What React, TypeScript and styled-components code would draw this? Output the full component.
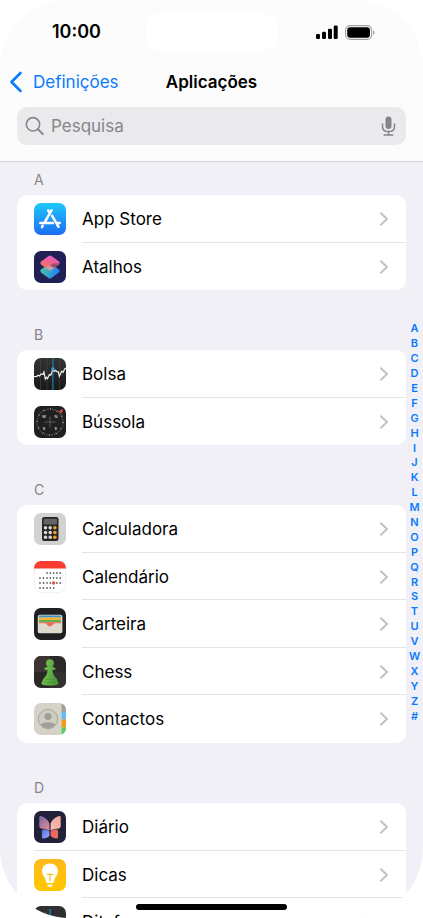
import React from "react";
import styled, { createGlobalStyle } from "styled-components";

const GlobalStyle = createGlobalStyle`
  *, *::before, *::after { box-sizing: border-box; }
  body {
    margin: 0;
    background: #ffffff;
    color: #000000;
    font-family: Inter, "Liberation Sans", sans-serif;
  }
`;

const Screen = styled.div`
  position: relative;
  display: flex;
  flex-direction: column;
  height: 100vh;
  overflow: hidden;
  border-radius: 70px;
  background: #f1f0f6;
`;

const Header = styled.header`
  flex: none;
  background: #fcfcfc;
  border-bottom: 1px solid #d5d5da;
`;

const StatusBar = styled.div`
  display: grid;
  grid-template-columns: 1fr 133px 1fr;
  align-items: center;
  height: 64px;
`;

const Clock = styled.time`
  padding-left: 8px;
  text-align: center;
  font-size: 18px;
  font-weight: 600;
  line-height: 24px;
`;

const Island = styled.div`
  height: 40px;
  border-radius: 20px;
  background: #ffffff;
`;

const StatusIcons = styled.div`
  display: flex;
  justify-content: center;
  align-items: center;
  gap: 7px;
  padding-right: 10px;
`;

const NavBar = styled.nav`
  display: grid;
  grid-template-columns: 1fr auto 1fr;
  align-items: center;
  height: 36px;
  padding: 0 9px;
`;

const BackLink = styled.a`
  display: flex;
  align-items: center;
  gap: 10px;
  color: #0a7aff;
  font-size: 17px;
  line-height: 24px;
  text-decoration: none;
`;

const Title = styled.h1`
  margin: 0;
  font-size: 17px;
  font-weight: 600;
  line-height: 24px;
`;

const SearchBar = styled.div`
  display: flex;
  align-items: center;
  gap: 7px;
  height: 38px;
  margin: 7px 17px 16px;
  padding: 0 10px 0 8px;
  border-radius: 10px;
  background: #eaeaec;
  color: #85858a;
`;

const SearchInput = styled.input`
  flex: 1;
  min-width: 0;
  padding: 0;
  border: 0;
  outline: 0;
  background: transparent;
  color: #000000;
  font: inherit;
  font-size: 17px;
  line-height: 24px;
  &::placeholder { color: #85858a; opacity: 1; }
`;

const IconButton = styled.button`
  display: flex;
  padding: 0;
  border: 0;
  background: none;
  color: inherit;
`;

const Content = styled.main`
  flex: 1;
  min-height: 0;
  overflow: hidden;
  padding: 1px 17px 0;
`;

const Section = styled.section`
  margin-bottom: 28px;
`;

const SectionTitle = styled.h2`
  height: 32px;
  margin: 0;
  padding: 7px 17px 0;
  color: #85858a;
  font-size: 14px;
  font-weight: 400;
  line-height: 20px;
`;

const Card = styled.ul`
  margin: 0;
  padding: 0;
  overflow: hidden;
  list-style: none;
  border-radius: 10px;
  background: #ffffff;
`;

const Row = styled.li`
  height: 48px;
  &:nth-child(even) { height: 47px; }
`;

const RowLink = styled.a`
  display: flex;
  align-items: center;
  gap: 16px;
  height: 100%;
  padding: 0 17px;
  color: inherit;
  font-size: 17px;
  line-height: 24px;
  text-decoration: none;
`;

const AppIcon = styled.svg`
  flex: none;
  width: 32px;
  height: 32px;
  border-radius: 7px;
`;

const AppName = styled.span`
  flex: 1;
`;

const Divider = styled.hr<{ $full?: boolean }>`
  height: 1px;
  margin: -1px 0 0 ${({ $full }) => ($full ? 17 : 65)}px;
  border: 0;
  background: #e4e4e6;
`;

const IndexList = styled.nav`
  position: absolute;
  top: 321px;
  right: 0;
  display: grid;
  grid-auto-rows: 1fr;
  align-items: center;
  width: 17px;
  height: 402px;
  text-align: center;
`;

const IndexLink = styled.a`
  color: #0a7aff;
  font-size: 11px;
  font-weight: 600;
  line-height: 14px;
  text-decoration: none;
`;

const HomeIndicator = styled.div`
  position: absolute;
  bottom: 8px;
  left: 50%;
  width: 151px;
  height: 6px;
  margin-left: -76px;
  border-radius: 3px;
  background: #000000;
`;

const Signal = () => (
  <svg width="22" height="14" viewBox="0 0 22 14" aria-label="Rede">
    <rect x="0" y="9" width="4" height="5" rx="1.2" />
    <rect x="6" y="6.7" width="4" height="7.3" rx="1.2" />
    <rect x="12" y="3.7" width="4" height="10.3" rx="1.2" />
    <rect x="17.7" y="0.5" width="4" height="13.5" rx="1.2" />
  </svg>
);

const Battery = () => (
  <svg width="30" height="15" viewBox="0 0 30 15" aria-label="Bateria">
    <rect x="0.6" y="0.6" width="26" height="13.8" rx="4.4" fill="none" stroke="#a2a2a2" strokeWidth="1.1" />
    <rect x="2.2" y="2.2" width="22.8" height="10.6" rx="3" />
    <path d="M28 5.2c2 .8 2 3.8 0 4.6z" fill="#a2a2a2" />
  </svg>
);

const BackChevron = () => (
  <svg width="14" height="22" viewBox="0 0 14 22" fill="none" stroke="currentColor" strokeWidth="2.6" strokeLinecap="round" strokeLinejoin="round">
    <path d="M11.5 2 2.5 11l9 9" />
  </svg>
);

const Chevron = () => (
  <svg width="10" height="14" viewBox="0 0 10 14" fill="none" stroke="#c2c2c4" strokeWidth="2" strokeLinecap="round" strokeLinejoin="round">
    <path d="m2 1.2 6 5.8-6 5.8" />
  </svg>
);

const Magnifier = () => (
  <svg width="19" height="20" viewBox="0 0 19 20" fill="none" stroke="currentColor" strokeWidth="1.6" strokeLinecap="round">
    <circle cx="8" cy="8.3" r="6.7" />
    <path d="m13 13.3 4.8 4.8" strokeWidth="2" />
  </svg>
);

const Microphone = () => (
  <svg width="15" height="20" viewBox="0 0 15 20" fill="none" stroke="currentColor" strokeWidth="1.5" strokeLinecap="round">
    <rect x="4.5" y="0.5" width="6" height="12.5" rx="3" fill="currentColor" stroke="none" />
    <path d="M1.500 8v2.400c0 3.400 2.500 5.200 6 5.200s6-1.800 6-5.200V8M7.500 15.600v3.400M3.200 19h8.600" />
  </svg>
);

const AppStoreArt = () => (
  <>
    <defs>
      <linearGradient id="store" x2="0" y2="1">
        <stop stopColor="#1ec8fb" />
        <stop offset="1" stopColor="#1d6cf1" />
      </linearGradient>
    </defs>
    <rect width="32" height="32" fill="url(#store)" />
    <g stroke="#fff" strokeWidth="2.5" strokeLinecap="round" fill="none">
      <path d="M17.600 7.300 10.300 19.800M14.200 7.300l1.700 2.900M18.200 12.800l6.300 11M6.300 19.900h12.500M22.300 19.900h3.400M8.700 22.800 8 24.100" />
    </g>
  </>
);

const ShortcutsArt = () => (
  <>
    <defs>
      <linearGradient id="scTop" x1="0.8" y1="0" x2="0.3" y2="1">
        <stop stopColor="#e45bd8" />
        <stop offset="0.55" stopColor="#ef6680" />
        <stop offset="1" stopColor="#fa765f" />
      </linearGradient>
      <linearGradient id="scBottom" x2="1" y2="0.2">
        <stop stopColor="#4ccc94" />
        <stop offset="0.5" stopColor="#39a9c7" />
        <stop offset="1" stopColor="#237cf4" />
      </linearGradient>
    </defs>
    <rect width="32" height="32" fill="#202057" />
    <path d="M7 18.500 14.300 13.200q1.700-1 3.400 0L25 18.500q1.400 1.500 0 3L17.500 27q-1.500 1-3 0L7 21.500q-1.400-1.500 0-3z" fill="url(#scBottom)" />
    <path d="M7 10.500 14.500 5q1.500-1 3 0L25 10.500q1.400 1.500 0 3l-7.300 5.300q-1.700 1-3.400 0L7 13.500q-1.400-1.500 0-3z" fill="url(#scTop)" />
    <path d="M16 14.500 21 17l-4 2.200q-1.200.5-2.700-.4L11.500 17z" fill="#b3b4c9" opacity="0.7" />
    <path d="m19 12.500 6.500-.5q.3 1-.5 1.800L20 17l-4-2.500z" fill="#75415f" opacity="0.65" />
  </>
);

const StocksArt = () => (
  <>
    <defs>
      <linearGradient id="stocks" x2="0" y2="1">
        <stop stopColor="#343434" />
        <stop offset="1" stopColor="#171717" />
      </linearGradient>
    </defs>
    <rect width="32" height="32" fill="url(#stocks)" />
    <path d="M6.500 0v32M13 0v32M25.500 0v32" stroke="#484848" strokeWidth="0.6" />
    <path d="M18.900 0v32" stroke="#167aa8" strokeWidth="1.3" />
    <path d="m0 18.500 2.400.2L4 17.200l1.500.8 1.600-2 1.800.6L10 14l1.300 7 1-1.800 1.200 1.500 1.800-4.200 1.500.6 2-5.700 1.500 2 1.300-1.100 1.600 1.600 1.200 0 .9 4.500 2.400-5.100 1.400 1.100 1.400-3.200L32 10" fill="none" stroke="#f4f4f4" strokeWidth="1.2" />
    <circle cx="18.9" cy="11" r="1.7" fill="#26a9e1" />
  </>
);

const CompassArt = () => (
  <>
    <rect width="32" height="32" fill="#202020" />
    <circle cx="16" cy="16" r="13" fill="none" stroke="#7c7c7c" strokeWidth="1.5" strokeDasharray="0.5 1.2" />
    <circle cx="16" cy="16" r="13" fill="none" stroke="#b5b5b5" strokeWidth="1.6" strokeDasharray="0.7 6.1" />
    <path d="M16 10.500v11M10.500 16h11" stroke="#777" strokeWidth="0.7" />
    <path d="m24.500 5 4.500-2-1.200 4.800z" fill="#ef4444" />
    <g fill="#cccccc" fontSize="4" fontWeight="600" textAnchor="middle">
      <text x="10" y="12">W</text>
      <text x="22" y="12">N</text>
      <text x="10" y="24">S</text>
      <text x="22" y="24">E</text>
    </g>
  </>
);

const CalculatorArt = () => (
  <>
    <rect width="32" height="32" fill="#d2d2d1" />
    <rect x="8" y="4" width="16.5" height="24" rx="2.3" fill="#262626" />
    <rect x="9.5" y="5.7" width="13.5" height="5.8" rx="1.3" fill="#636463" />
    {[14.7, 19.5, 24.2].map((y) => (
      <g key={y}>
        <circle cx="11.5" cy={y} r="1.75" fill="#d8d8d8" />
        <circle cx="16.2" cy={y} r="1.75" fill="#d8d8d8" />
        <circle cx="20.9" cy={y} r="1.75" fill="#f79f20" />
      </g>
    ))}
  </>
);

const calendarWeeks: [number, number[]][] = [
  [12, [13, 16.3, 19.6, 22.9, 26.2]],
  [17, [6, 9.5, 13, 16.3, 19.6, 22.9, 26.2]],
  [22, [6, 9.5, 13, 16.3, 22.9, 26.2]],
  [27, [6, 9.5, 13, 16.3, 19.6]],
];

const CalendarArt = () => (
  <>
    <rect x="0.3" y="0.3" width="31.4" height="31.4" rx="7" fill="#fff" stroke="#e4e4e4" strokeWidth="0.6" />
    <path d="M0 0h32v7.500H0z" fill="#fb3c31" />
    {calendarWeeks.map(([y, days]) =>
      days.map((x) => <circle key={`${x}-${y}`} cx={x} cy={y} r="0.8" fill="#161616" />),
    )}
    <circle cx="19.6" cy="22" r="1.7" fill="#ee4a43" />
  </>
);

const WalletArt = () => (
  <>
    <rect width="32" height="32" fill="#1f2021" />
    <rect x="3.8" y="6.7" width="24.6" height="18.6" rx="2" fill="#d9d7c9" />
    <path d="M5 9.500V8.600q0-1.200 1.200-1.200h19.600q1.200 0 1.200 1.200v.9z" fill="#3e93c9" />
    <path d="M5 9.500h22v2.400H5z" fill="#efb23c" />
    <path d="M5 11.900h22v2.400H5z" fill="#66ae4c" />
    <path d="M5 14.200h22v2.500H5z" fill="#ec6b5d" />
    <path d="M4 15.200h7.400c1.500 0 1.800 3.300 4.600 3.300s3.100-3.300 4.600-3.300H28v8.600q0 1.300-1.300 1.300H5.300Q4 25.100 4 23.800z" fill="#dddacd" />
    <path d="M11 14.800c1.900 0 2.200 3.700 5 3.700s3.100-3.700 5-3.700z" fill="#ec6b5d" />
  </>
);

const ChessArt = () => (
  <>
    <defs>
      <linearGradient id="pawn" x2="1" y2="0.3">
        <stop stopColor="#83cc52" />
        <stop offset="1" stopColor="#4b993a" />
      </linearGradient>
    </defs>
    <rect width="32" height="32" fill="#2b2928" />
    <path d="M0 0h16v16H0z" fill="#3d3533" />
    <path d="M16 16h16v16H16z" fill="#343130" />
    <path d="M16 3.300c-2.300 0-4 1.700-4 3.700 0 1.500.7 2.700 1.700 3.500l-3 1.500q-.9 1.300.5 1.900h2.300c-.1 4-1.500 6.300-4 8.600-.8.800-.5 2.100-1.300 2.900-1 .8-1 2.300 0 3 3.600 1.300 12 1.300 15.600 0 1-.7 1-2.200 0-3-.8-.8-.5-2.100-1.300-2.900-2.500-2.300-3.900-4.600-4-8.600h2.300q1.400-.6.500-1.900l-3-1.500c1-.8 1.700-2 1.700-3.500 0-2-1.700-3.700-4-3.700z" fill="url(#pawn)" />
    <path d="M9 22.500c4 1.600 10 1.600 14 0M8.500 25.500c4 1.400 11 1.400 15 0" fill="none" stroke="#418736" strokeWidth="0.5" />
  </>
);

const ContactsArt = () => (
  <>
    <rect width="32" height="32" fill="#d5d3c8" />
    <path d="M27.500 0H32v9h-4.500z" fill="#a19f98" />
    <path d="M27.500 8.500H32v8h-4.500z" fill="#61bdf0" />
    <path d="M27.500 16.500H32v8h-4.500z" fill="#f39a1e" />
    <path d="M27.500 24.500H32V32h-4.500z" fill="#5acb64" />
    <circle cx="14" cy="16" r="9.7" fill="#cfcdc2" stroke="#a6a49b" strokeWidth="1" />
    <circle cx="14" cy="13.5" r="3.6" fill="#a19f97" />
    <path d="M6.600 21.700c3-3.200 11.800-3.200 14.800 0-3.400 5-11.400 5-14.800 0z" fill="#a19f97" />
  </>
);

const JournalArt = () => (
  <>
    <defs>
      <linearGradient id="wingL" x2="0.6" y2="1">
        <stop stopColor="#75649e" />
        <stop offset="1" stopColor="#dc8c9d" />
      </linearGradient>
      <linearGradient id="wingR" x1="1" x2="0" y2="1">
        <stop stopColor="#f2a598" />
        <stop offset="1" stopColor="#f5c0b7" />
      </linearGradient>
      <linearGradient id="tailL" x2="1" y2="1">
        <stop stopColor="#5574dc" />
        <stop offset="1" stopColor="#9ba7f8" />
      </linearGradient>
    </defs>
    <rect width="32" height="32" fill="#21223a" />
    <path d="M15.400 20V12.500C14 8.500 10.500 6 6.800 5q-1.500-.2-1.500 1.200v9c0 2 3 3 5.200 3.400 2 .4 3.800.8 4.900 1.400z" fill="url(#wingL)" />
    <path d="M16.600 20V12.500C18 8.500 21.500 6 25.200 5q1.500-.2 1.500 1.200v9c0 2-3 3-5.200 3.400-2 .4-3.800.8-4.900 1.400z" fill="url(#wingR)" />
    <path d="M15.400 20.500v4.300c-1.800 2-4.300 3-6.500 2.700q-1-.1-1-1.200v-6.400c0-1.600 6.500-2.400 7.500.6z" fill="url(#tailL)" />
    <path d="M16.600 20.500v4.300c1.800 2 4.300 3 6.500 2.700q1-.1 1-1.200v-6.400c0-1.600-6.500-2.400-7.500.6z" fill="#ed665f" />
    <path d="M15.400 20.200c-1.500-2-5-1.500-7.500-2.700M16.600 20.200c1.500-2 5-1.500 7.500-2.700" fill="none" stroke="#21223a" strokeWidth="0.5" />
  </>
);

const TipsArt = () => (
  <>
    <defs>
      <linearGradient id="tips" x2="0" y2="1">
        <stop stopColor="#ffb81c" />
        <stop offset="1" stopColor="#ffc800" />
      </linearGradient>
    </defs>
    <rect width="32" height="32" fill="url(#tips)" />
    <path d="M16 4.500c-4.700 0-8 3.400-8 7.600 0 3 1.500 4.600 2.800 6.600 1.200 1.900 1 4.700 2.200 5.400h6c1.200-.7 1-3.500 2.200-5.400 1.300-2 2.800-3.600 2.800-6.600 0-4.200-3.300-7.600-8-7.600z" fill="#fff" />
    <path d="M13.300 25.400h5.400l-.5 1.900q-2.200 1.400-4.400 0z" fill="#fff" />
    <path d="M12.800 15.300h6.400M16 15.300v7" stroke="#f8ba13" strokeWidth="1.2" />
  </>
);

const VoiceMemosArt = () => (
  <>
    <rect width="32" height="32" fill="#303031" />
    <path d="M8.500 10v12M11.300 6v20" stroke="#d85550" strokeWidth="0.9" />
    <path d="M16 3v26" stroke="#249fd2" strokeWidth="1.1" />
    <path d="M20 13v6M23 14v4" stroke="#bcbcbc" strokeWidth="0.8" />
  </>
);

type App = { name: string; art: React.ReactNode; fullLine?: boolean };

const sections: { letter: string; apps: App[] }[] = [
  {
    letter: "A",
    apps: [
      { name: "App Store", art: <AppStoreArt /> },
      { name: "Atalhos", art: <ShortcutsArt /> },
    ],
  },
  {
    letter: "B",
    apps: [
      { name: "Bolsa", art: <StocksArt /> },
      { name: "Bússola", art: <CompassArt /> },
    ],
  },
  {
    letter: "C",
    apps: [
      { name: "Calculadora", art: <CalculatorArt /> },
      { name: "Calendário", art: <CalendarArt /> },
      { name: "Carteira", art: <WalletArt /> },
      { name: "Chess", art: <ChessArt /> },
      { name: "Contactos", art: <ContactsArt /> },
    ],
  },
  {
    letter: "D",
    apps: [
      { name: "Diário", art: <JournalArt />, fullLine: true },
      { name: "Dicas", art: <TipsArt /> },
      { name: "Ditafone", art: <VoiceMemosArt /> },
    ],
  },
];

const indexLetters = [..."ABCDEFGHIJKLMNOPQRSTUVWXYZ#"];

export default function App() {
  return (
    <>
      <GlobalStyle />
      <Screen>
        <Header>
          <StatusBar>
            <Clock>10:00</Clock>
            <Island />
            <StatusIcons>
              <Signal />
              <Battery />
            </StatusIcons>
          </StatusBar>
          <NavBar>
            <BackLink href="#definicoes">
              <BackChevron />
              Definições
            </BackLink>
            <Title>Aplicações</Title>
          </NavBar>
          <SearchBar>
            <Magnifier />
            <SearchInput type="search" placeholder="Pesquisa" aria-label="Pesquisa" />
            <IconButton type="button" aria-label="Ditar">
              <Microphone />
            </IconButton>
          </SearchBar>
        </Header>
        <Content>
          {sections.map(({ letter, apps }) => (
            <Section key={letter} id={`sec-${letter}`}>
              <SectionTitle>{letter}</SectionTitle>
              <Card>
                {apps.map(({ name, art, fullLine }, i) => (
                  <Row key={name}>
                    <RowLink href={`#${name}`}>
                      <AppIcon viewBox="0 0 32 32" aria-hidden="true">
                        {art}
                      </AppIcon>
                      <AppName>{name}</AppName>
                      <Chevron />
                    </RowLink>
                    {i < apps.length - 1 && <Divider $full={fullLine} />}
                  </Row>
                ))}
              </Card>
            </Section>
          ))}
        </Content>
        <IndexList aria-label="Índice">
          {indexLetters.map((l) => (
            <IndexLink key={l} href={`#sec-${l}`}>
              {l}
            </IndexLink>
          ))}
        </IndexList>
        <HomeIndicator />
      </Screen>
    </>
  );
}
